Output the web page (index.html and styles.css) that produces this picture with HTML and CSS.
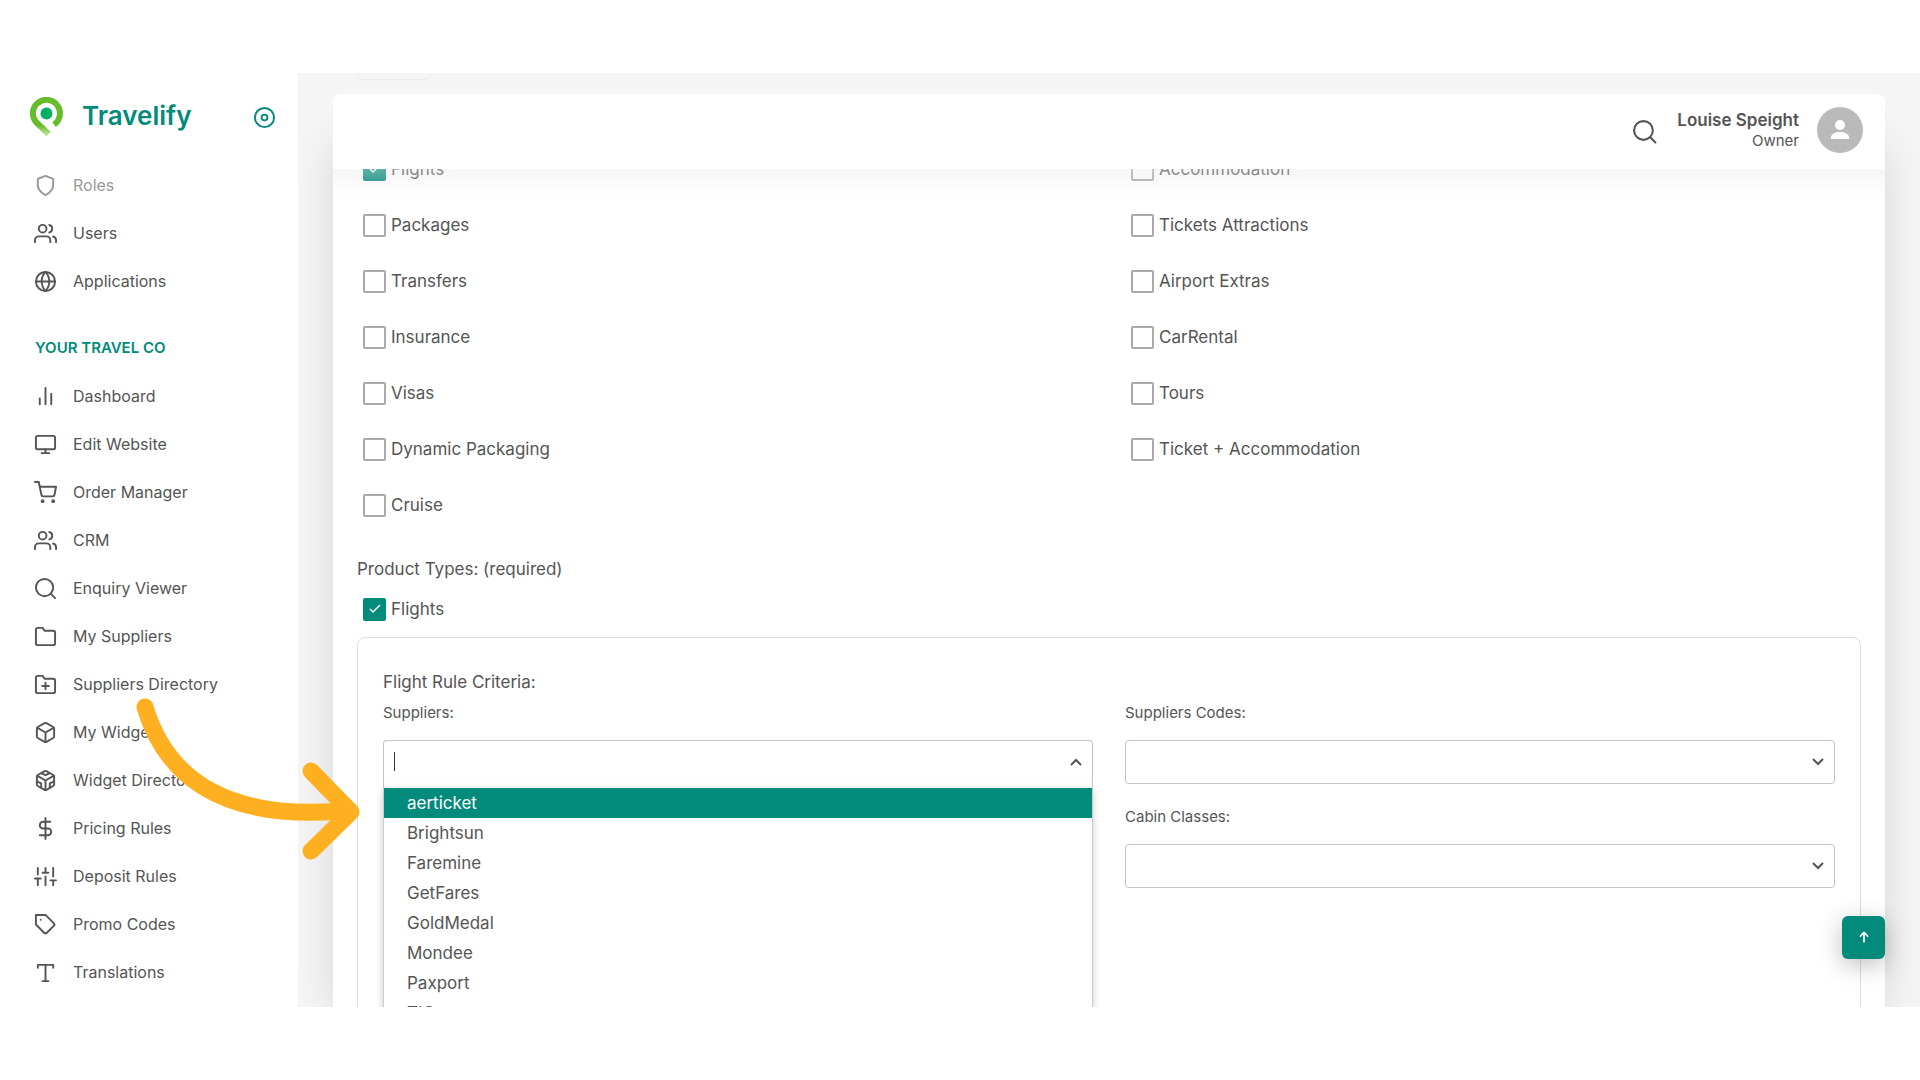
FILE: index.html
```html
<!DOCTYPE html>
<html lang="en">
<head>
    <meta charset="UTF-8">
    <meta name="viewport" content="width=device-width, initial-scale=1.0">
    <title>Travelify</title>
    <link rel="stylesheet" href="styles.css">
</head>
<body>

    <div class="app">

      <aside class="sidebar">
        <div class="brand">
          <svg class="brand-logo" viewBox="0 0 34 40">
            <defs>
              <linearGradient id="pin" x1="0" y1="0" x2="0" y2="1">
                <stop offset="0.75" stop-color="#66bc29"/>
                <stop offset="1" stop-color="#b5e08f"/>
              </linearGradient>
            </defs>
            <path d="M19.500 37L8 26A13.500 13.500 0 1 1 25 27.500" fill="none" stroke="url(#pin)" stroke-width="6"/>
            <circle cx="17.500" cy="16.500" r="6" fill="#00b067"/>
          </svg>
          <span class="brand-name">Travelify</span>
          <button type="button" class="icon-button brand-toggle" aria-label="Toggle menu">
            <svg class="icon" viewBox="0 0 24 24"><circle cx="12" cy="12" r="10"/><circle cx="12" cy="12" r="3"/></svg>
          </button>
        </div>

        <nav class="menu">
          <a href="#" class="menu-item faded"><svg class="icon" viewBox="0 0 24 24"><path d="M12 22s8-4 8-10V5l-8-3-8 3v7c0 6 8 10 8 10z"/></svg>Roles</a>
          <a href="#" class="menu-item"><svg class="icon" viewBox="0 0 24 24"><path d="M17 21v-2a4 4 0 0 0-4-4H5a4 4 0 0 0-4 4v2"/><circle cx="9" cy="7" r="4"/><path d="M23 21v-2a4 4 0 0 0-3-3.87"/><path d="M16 3.13a4 4 0 0 1 0 7.75"/></svg>Users</a>
          <a href="#" class="menu-item"><svg class="icon" viewBox="0 0 24 24"><circle cx="12" cy="12" r="10"/><path d="M2 12h20"/><path d="M12 2a15.3 15.3 0 0 1 4 10 15.3 15.3 0 0 1-4 10 15.3 15.3 0 0 1-4-10 15.3 15.3 0 0 1 4-10z"/></svg>Applications</a>

          <h2 class="menu-title">YOUR TRAVEL CO</h2>

          <a href="#" class="menu-item"><svg class="icon" viewBox="0 0 24 24"><path d="M18 20V9M12 20V3M6 20v-6"/></svg>Dashboard</a>
          <a href="#" class="menu-item"><svg class="icon" viewBox="0 0 24 24"><rect x="2" y="3" width="20" height="14" rx="2"/><path d="M8 21h8M12 17v4"/></svg>Edit Website</a>
          <a href="#" class="menu-item"><svg class="icon" viewBox="0 0 24 24"><circle cx="9" cy="21" r="1"/><circle cx="20" cy="21" r="1"/><path d="M1 1h4l2.68 13.39a2 2 0 0 0 2 1.61h9.72a2 2 0 0 0 2-1.61L23 6H6"/></svg>Order Manager</a>
          <a href="#" class="menu-item"><svg class="icon" viewBox="0 0 24 24"><path d="M17 21v-2a4 4 0 0 0-4-4H5a4 4 0 0 0-4 4v2"/><circle cx="9" cy="7" r="4"/><path d="M23 21v-2a4 4 0 0 0-3-3.87"/><path d="M16 3.13a4 4 0 0 1 0 7.75"/></svg>CRM</a>
          <a href="#" class="menu-item"><svg class="icon" viewBox="0 0 24 24"><circle cx="11" cy="11" r="9"/><path d="M22 22l-4.6-4.6"/></svg>Enquiry Viewer</a>
          <a href="#" class="menu-item"><svg class="icon" viewBox="0 0 24 24"><path d="M22 19a2 2 0 0 1-2 2H4a2 2 0 0 1-2-2V5a2 2 0 0 1 2-2h5l2 3h9a2 2 0 0 1 2 2z"/></svg>My Suppliers</a>
          <a href="#" class="menu-item"><svg class="icon" viewBox="0 0 24 24"><path d="M22 19a2 2 0 0 1-2 2H4a2 2 0 0 1-2-2V5a2 2 0 0 1 2-2h5l2 3h9a2 2 0 0 1 2 2z"/><path d="M12 10v7M8.500 13.500h7"/></svg>Suppliers Directory</a>
          <a href="#" class="menu-item"><svg class="icon" viewBox="0 0 24 24"><path d="M21 16V8a2 2 0 0 0-1-1.730l-7-4a2 2 0 0 0-2 0l-7 4A2 2 0 0 0 3 8v8a2 2 0 0 0 1 1.730l7 4a2 2 0 0 0 2 0l7-4A2 2 0 0 0 21 16z"/><path d="M3.270 6.960L12 12.010l8.730-5.050M12 22.080V12"/></svg>My Widgets</a>
          <a href="#" class="menu-item"><svg class="icon" viewBox="0 0 24 24"><path d="M21 16V8a2 2 0 0 0-1-1.730l-7-4a2 2 0 0 0-2 0l-7 4A2 2 0 0 0 3 8v8a2 2 0 0 0 1 1.730l7 4a2 2 0 0 0 2 0l7-4A2 2 0 0 0 21 16z"/><path d="M3.270 6.960L12 12.010l8.730-5.050M12 22.080V12"/><path d="M8 4.500L12 6.500l4-2M3 13l4.500 2v4.500M21 13l-4.500 2v4.500"/></svg>Widget Directory</a>
          <a href="#" class="menu-item"><svg class="icon" viewBox="0 0 24 24"><path d="M12 1v22"/><path d="M17 5H9.500a3.500 3.500 0 0 0 0 7h5a3.500 3.500 0 0 1 0 7H6"/></svg>Pricing Rules</a>
          <a href="#" class="menu-item"><svg class="icon" viewBox="0 0 24 24"><path d="M4 21v-7M4 10V3M12 21v-9M12 8V3M20 21v-5M20 12V3M1 14h6M9 8h6M17 16h6"/></svg>Deposit Rules</a>
          <a href="#" class="menu-item"><svg class="icon" viewBox="0 0 24 24"><path d="M20.590 13.410l-7.170 7.170a2 2 0 0 1-2.830 0L2 12V2h10l8.590 8.590a2 2 0 0 1 0 2.820z"/><path d="M7 7h.01"/></svg>Promo Codes</a>
          <a href="#" class="menu-item"><svg class="icon" viewBox="0 0 24 24"><path d="M4 7V4h16v3M9 21h6M12 4v17"/></svg>Translations</a>
        </nav>
      </aside>

      <main class="main">
        <div class="tab-edge"></div>
        <div class="topbar">
          <button type="button" class="icon-button search-button" aria-label="Search">
            <svg class="icon" viewBox="0 0 24 24"><circle cx="11" cy="11" r="9"/><path d="M22.500 22.500l-5-5"/></svg>
          </button>
          <div class="user">
            <span class="user-name">Louise Speight</span>
            <span class="user-role">Owner</span>
          </div>
          <svg class="avatar" viewBox="0 0 46 46">
            <circle cx="23" cy="23" r="23" fill="#bababa"/>
            <circle cx="23" cy="18" r="5" fill="#fff"/>
            <path d="M14 32v-2c0-3 5-5 9-5s9 2 9 5v2z" fill="#fff"/>
          </svg>
        </div>

        <form class="panel">
          <div class="products">
            <label class="check"><input type="checkbox" checked>Flights</label>
            <label class="check"><input type="checkbox">Accommodation</label>
            <label class="check"><input type="checkbox">Packages</label>
            <label class="check"><input type="checkbox">Tickets Attractions</label>
            <label class="check"><input type="checkbox">Transfers</label>
            <label class="check"><input type="checkbox">Airport Extras</label>
            <label class="check"><input type="checkbox">Insurance</label>
            <label class="check"><input type="checkbox">CarRental</label>
            <label class="check"><input type="checkbox">Visas</label>
            <label class="check"><input type="checkbox">Tours</label>
            <label class="check"><input type="checkbox">Dynamic Packaging</label>
            <label class="check"><input type="checkbox">Ticket + Accommodation</label>
            <label class="check"><input type="checkbox">Cruise</label>
          </div>

          <p class="types-title">Product Types: (required)</p>
          <label class="check"><input type="checkbox" checked>Flights</label>

          <div class="criteria">
            <h3 class="criteria-title">Flight Rule Criteria:</h3>
            <div class="fields">
              <div class="field open">
                <label for="suppliers">Suppliers:</label>
                <div class="combo">
                  <span class="caret"></span>
                  <input type="text" id="suppliers" class="control">
                  <svg class="chevron" viewBox="0 0 12 8"><path d="M1 7l5-5 5 5"/></svg>
                  <ul class="options">
                    <li class="selected">aerticket</li>
                    <li>Brightsun</li>
                    <li>Faremine</li>
                    <li>GetFares</li>
                    <li>GoldMedal</li>
                    <li>Mondee</li>
                    <li>Paxport</li>
                    <li>TIG</li>
                  </ul>
                </div>
              </div>
              <div class="field">
                <label for="codes">Suppliers Codes:</label>
                <div class="combo">
                  <select id="codes" class="control"></select>
                  <svg class="chevron" viewBox="0 0 12 8"><path d="M1 1l5 5 5-5"/></svg>
                </div>
              </div>
              <div class="field second-row">
                <label for="cabins">Cabin Classes:</label>
                <div class="combo">
                  <select id="cabins" class="control"></select>
                  <svg class="chevron" viewBox="0 0 12 8"><path d="M1 1l5 5 5-5"/></svg>
                </div>
              </div>
            </div>
          </div>
        </form>

        <button type="button" class="to-top" aria-label="Back to top">
          <svg viewBox="0 0 12 14"><path d="M6 13V2M1 6l5-5 5 5"/></svg>
        </button>
      </main>

      <!-- arrow pointing at the suppliers list -->
      <svg class="arrow" viewBox="0 0 226 168">
        <path d="M9 11C28 75 80 125 205 115"/>
        <path d="M175 75l40 41-40 39"/>
      </svg>

    </div>

</body>
</html>
```
FILE: styles.css
```css
* {
  box-sizing: border-box;
}

body {
  margin: 0;
  padding: 73px 0;
  height: 100vh;
  background-color: #fff;
  color: #555;
  font-family: Inter, "Open Sans", sans-serif;
  font-size: 17px;
}

.app {
  position: relative;
  display: flex;
  height: 100%;
  overflow: hidden;
}

.icon {
  width: 23px;
  height: 23px;
  flex: none;
  fill: none;
  stroke: currentColor;
  stroke-width: 2;
  stroke-linecap: round;
  stroke-linejoin: round;
}

.icon-button {
  display: flex;
  padding: 0;
  border: none;
  background: none;
  color: inherit;
  cursor: pointer;
}

/* Sidebar */
.sidebar {
  width: 298px;
  flex: none;
  padding: 20px 0 0;
  background-color: #fff;
}

.brand {
  display: flex;
  align-items: center;
  height: 48px;
  padding: 0 22px 0 29px;
  color: #028a7b;
}

.brand-logo {
  width: 34px;
  height: 40px;
}

.brand-name {
  margin-left: 19px;
  padding-bottom: 4px;
  font-size: 26px;
  font-weight: 600;
}

.brand-toggle {
  margin-left: auto;
}

.menu {
  padding-top: 20px;
}

.menu-item {
  display: flex;
  align-items: center;
  gap: 16px;
  height: 48px;
  padding-left: 34px;
  color: #555;
  font-size: 16px;
  text-decoration: none;
}

.faded {
  opacity: 0.6;
}

.menu-title {
  margin: 0;
  padding: 33px 0 14px 35px;
  color: #028a7b;
  font-size: 15px;
  font-weight: 600;
  line-height: 20px;
}

/* Main area */
.main {
  flex: 1;
  display: flex;
  flex-direction: column;
  min-width: 0;
  padding: 0 35px;
  background-color: #f5f5f5;
}

.tab-edge {
  flex: none;
  width: 74px;
  height: 7px;
  margin: 0 0 14px 24px;
  border: 1px solid #e6efee;
  border-top: none;
  border-radius: 0 0 7px 7px;
}

.topbar {
  position: relative;
  z-index: 2;
  display: flex;
  flex: none;
  align-items: center;
  justify-content: flex-end;
  height: 75px;
  padding: 0 22px 4px;
  border-radius: 8px;
  background-color: #fff;
}

/* content fades out under the bar */
.topbar::after {
  content: "";
  position: absolute;
  top: 100%;
  left: 0;
  right: 0;
  height: 28px;
  background: linear-gradient(rgba(232, 232, 232, 0.4), rgba(255, 255, 255, 0));
}

.search-button {
  padding-top: 4px;
}

.search-button .icon {
  width: 25px;
  height: 25px;
}

.user {
  display: flex;
  flex-direction: column;
  margin: 0 18px 0 20px;
  text-align: right;
}

.user-name {
  font-size: 17px;
  font-weight: 600;
  line-height: 22px;
}

.user-role {
  font-size: 15px;
  line-height: 20px;
}

.avatar {
  width: 46px;
  height: 46px;
}

.panel {
  flex: 1;
  margin-top: -28px;
  padding: 0 24px;
  background-color: #fff;
  box-shadow: 0 4px 40px rgba(0, 0, 0, 0.12);
}

.products {
  display: grid;
  grid-template-columns: 1fr 1fr;
  column-gap: 32px;
}

.check {
  display: flex;
  align-items: center;
  gap: 5px;
  height: 56px;
  padding-left: 6px;
}

.check input {
  appearance: none;
  width: 23px;
  height: 23px;
  margin: 0;
  border: 2px solid #aaa;
  border-radius: 2px;
}

.check input:checked {
  border-color: #028a7b;
  background: #028a7b url("data:image/svg+xml,%3Csvg xmlns='http://www.w3.org/2000/svg' viewBox='0 0 12 10' fill='none' stroke='white' stroke-width='1.500'%3E%3Cpath d='M1 5l3 3 7-7'/%3E%3C/svg%3E") center / 12px 10px no-repeat;
}

.types-title {
  margin: 24px 0 0;
  line-height: 24px;
}

/* Flight rule box */
.criteria {
  height: 100%;
  padding: 32px 25px;
  border: 1px solid #ddd;
  border-radius: 8px;
}

.criteria-title {
  margin: 0;
  font-size: 17px;
  font-weight: 400;
  line-height: 24px;
}

.fields {
  display: grid;
  grid-template-columns: 1fr 1fr;
  gap: 10px 32px;
}

.second-row {
  grid-column: 2;
}

.field label {
  display: block;
  padding: 9px 0 17px;
  font-size: 15px;
  line-height: 20px;
}

.combo {
  position: relative;
}

.control {
  display: block;
  appearance: none;
  width: 100%;
  height: 44px;
  padding: 0 12px;
  border: 1px solid #c4c4c4;
  border-radius: 4px;
  background-color: #fff;
  font: inherit;
}

.open .control {
  height: 48px;
  border-bottom: none;
  border-radius: 4px 4px 0 0;
}

.caret {
  position: absolute;
  top: 12px;
  left: 11px;
  width: 1px;
  height: 19px;
  background-color: #333;
}

.chevron {
  position: absolute;
  top: 18px;
  right: 11px;
  width: 12px;
  height: 8px;
  fill: none;
  stroke: #555;
  stroke-width: 2;
}

.options {
  position: absolute;
  top: 48px;
  left: 0;
  right: 0;
  z-index: 1;
  margin: 0;
  padding: 0;
  border: 1px solid #ccc;
  border-top: none;
  background-color: #fff;
  box-shadow: 0 2px 8px rgba(0, 0, 0, 0.2);
  list-style: none;
}

.options li {
  padding-left: 23px;
  line-height: 30px;
}

.options .selected {
  background-color: #028a7b;
  color: #fff;
}

.to-top {
  position: absolute;
  right: 35px;
  bottom: 48px;
  display: flex;
  align-items: center;
  justify-content: center;
  width: 43px;
  height: 43px;
  padding: 0;
  border: none;
  border-radius: 6px;
  background-color: #028a7b;
  box-shadow: 0 6px 24px rgba(0, 0, 0, 0.25);
}

.to-top svg {
  width: 10px;
  height: 13px;
  fill: none;
  stroke: #fff;
  stroke-width: 2;
}

.arrow {
  position: absolute;
  top: 623px;
  left: 136px;
  z-index: 3;
  width: 226px;
  height: 168px;
  fill: none;
  stroke: #ffb020;
  stroke-width: 17;
  stroke-linecap: round;
  stroke-linejoin: round;
}
```
